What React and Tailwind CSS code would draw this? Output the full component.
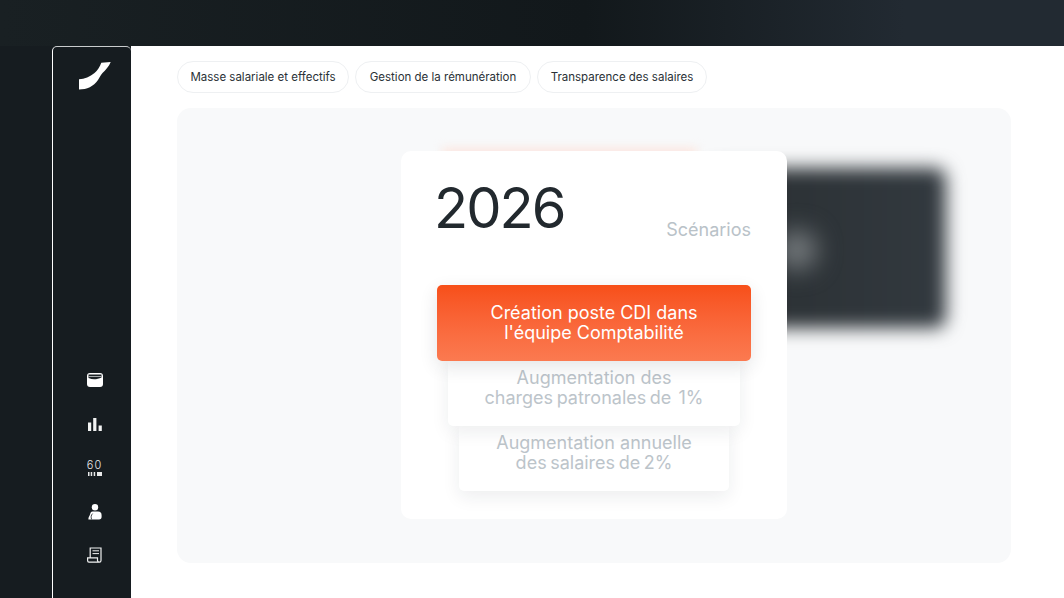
const font = { fontFamily: "Inter, 'Liberation Sans', sans-serif" }

function Logo() {
  return (
    <svg width="32" height="28" viewBox="0 0 32 28" fill="white">
      <path d="M31.7 0 L22.3 .7 C20.8 5 18.5 8.5 15.5 11 C11 14.8 5.5 17 0 17.3 L0 27.5 C8 27.5 14.5 24.5 19 18 C20.5 15.7 21.5 13.5 23.5 11 C26.5 8 30 4.5 31.7 0 Z" />
    </svg>
  )
}

function WalletIcon() {
  return (
    <svg width="16" height="14" viewBox="0 0 16 14">
      <rect x="0" y="0" width="16" height="14" rx="3" fill="white" />
      <path d="M1.5 1.6 H14.5 V4.5 C10 6.5 6 7 1.5 5 Z" fill="#1c2226" />
      <path d="M1.5 3 H14.5 V4 H1.5 Z" fill="#a8abad" />
    </svg>
  )
}

function BarsIcon() {
  return (
    <svg width="14" height="13" viewBox="0 0 14 13" fill="#f2f3f3">
      <rect x="0" y="4.5" width="3.2" height="8.5" />
      <rect x="5.2" y="0" width="3.2" height="13" />
      <rect x="10.6" y="7.5" width="3.2" height="5.5" />
    </svg>
  )
}

function CounterIcon() {
  return (
    <div className="flex w-[14px] flex-col items-center gap-[2px]">
      <span className="text-[11px] leading-[9px] font-light tracking-[1px] text-[#e8e9e9]">60</span>
      <svg width="14" height="4" viewBox="0 0 14 4" fill="#e8e9e9">
        <rect x="0" y="0" width="1.5" height="4" />
        <rect x="2.7" y="0" width="1.5" height="4" />
        <rect x="5.7" y="0" width="1.5" height="4" />
        <rect x="9" y="0" width="5" height="4" />
      </svg>
    </div>
  )
}

function UserIcon() {
  return (
    <svg width="14" height="16" viewBox="0 0 14 16" fill="white">
      <circle cx="7" cy="3.3" r="3.2" />
      <path d="M4.5 7.6 H10 A3.6 3.6 0 0 1 13.6 11.2 V12.8 A2.6 2.6 0 0 1 11 15.4 H.4 C.2 13.5 1.5 12 2 10.5 C2.5 8.6 3 7.6 4.5 7.6 Z" />
      <path d="M3.6 15.4 C2.8 13.4 3 11 4.6 9.6" stroke="#161c20" strokeWidth=".8" fill="none" />
    </svg>
  )
}

function ReceiptIcon() {
  return (
    <svg width="15" height="16" viewBox="0 0 15 16" fill="none" stroke="#f0f1f1" strokeWidth="1.2">
      <path d="M3.2 10.5 V1 H14 V13.5 C14 14.6 13.4 15.2 12.4 15.2 H2 C1 15.2 .6 14.4 .6 13.5 V10.8 H10.5 V13.5 C10.5 14.6 11.2 15.2 12.4 15.2" />
      <path d="M5.5 3.8 H12 M5.5 6.6 H12" strokeWidth="1" />
    </svg>
  )
}

const tabs = [
  { label: "Masse salariale et effectifs", width: "w-[172px]" },
  { label: "Gestion de la rémunération", width: "w-[176px]" },
  { label: "Transparence des salaires", width: "w-[170px]" },
]

export default function App() {
  return (
    <div className="flex h-[598px] w-[1064px] flex-col overflow-hidden bg-[#161c20]" style={font}>
      <div className="h-[46px] bg-gradient-to-r from-[#192023] via-[#12181b] via-55% to-[#222a32] to-85%" />

      <div className="flex flex-1">
        <div className="w-[52px]" />

        <aside className="flex w-[79px] flex-col items-center justify-between rounded-t-[5px] border-t border-l border-t-[#c9cccd] border-l-white bg-[#161c20] pt-[15px] pb-[22px] pl-[5px]">
          <Logo />
          <nav className="flex flex-col items-center">
            <div className="flex h-[44px] items-center"><WalletIcon /></div>
            <div className="flex h-[44px] items-center"><BarsIcon /></div>
            <div className="flex h-[44px] items-center"><CounterIcon /></div>
            <div className="flex h-[44px] items-center"><UserIcon /></div>
            <div className="flex h-[42px] items-center"><ReceiptIcon /></div>
          </nav>
        </aside>

        <main className="flex flex-1 flex-col bg-white pt-[15px] pr-[53px] pb-[35px] pl-[46px]">
          <div className="flex gap-[6px]">
            {tabs.map((tab) => (
              <div key={tab.label} className={`flex h-[32px] items-center justify-center rounded-full border border-[#eef0f2] pt-px text-[11.5px] text-[#2a3136] ${tab.width}`}>
                {tab.label}
              </div>
            ))}
          </div>

          <section className="relative mt-[15px] flex-1 overflow-hidden rounded-[14px] bg-[#f8f9fa] pt-[43px] pl-[224px]">
            <div className="absolute top-[60px] left-[531px] h-[160px] w-[238px] rounded-[10px] bg-gradient-to-r from-[#2a2f32] to-[#32393f] blur-[9px]" />
            <div className="absolute top-[122px] left-[600px] h-[40px] w-[40px] rounded-full bg-[#74797c] blur-[12px]" />
            <div className="absolute top-[40px] left-[265px] h-[12px] w-[255px] bg-[#fce6df] blur-[5px]" />

            <div className="relative flex h-[368px] w-[386px] flex-col rounded-[10px] bg-white px-[36px]">
              <div className="flex items-end justify-between">
                <div className="mt-[27px] ml-[-3px] text-[56px] leading-[60px] font-normal tracking-[-2px] text-[#22292e]">2026</div>
                <div className="mb-[-3px] text-[18px] leading-[22px] text-[#b9c2c8]">Scénarios</div>
              </div>

              <div className="mt-[47px] flex flex-col items-center">
                <div className="relative z-30 flex h-[76px] w-[314px] items-center justify-center rounded-[5px] bg-gradient-to-b from-[#f74f18] to-[#fb7a50] text-center text-[18px] leading-[20px] text-white shadow-[0_6px_18px_rgba(30,40,50,0.12)]">
                  <span>Création poste CDI dans<br />l'équipe Comptabilité</span>
                </div>
                <div className="relative z-20 flex h-[65px] w-[292px] justify-center rounded-b-[5px] bg-white pt-[7px] text-center text-[18px] leading-[20px] text-[#bcc4ca] shadow-[0_6px_18px_rgba(30,40,50,0.08)]">
                  <span>Augmentation des<br /><span className="[word-spacing:-1.5px]">charges patronales de&nbsp;&nbsp;1%</span></span>
                </div>
                <div className="relative z-10 flex h-[65px] w-[270px] justify-center rounded-b-[5px] bg-white pt-[7px] text-center text-[18px] leading-[20px] text-[#bcc4ca] shadow-[0_6px_18px_rgba(30,40,50,0.08)]">
                  <span>Augmentation annuelle<br /><span className="[word-spacing:-1.5px]">des salaires de 2%</span></span>
                </div>
              </div>
            </div>
          </section>
        </main>
      </div>
    </div>
  )
}
